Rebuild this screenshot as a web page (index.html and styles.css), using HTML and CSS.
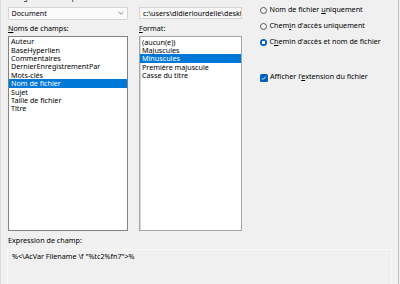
FILE: index.html
```html
<!DOCTYPE html>
<html lang="fr">
<head>
<meta charset="utf-8">
<link rel="stylesheet" href="styles.css">
</head>
<body>
<div class="dialog">
  <div class="top">
    <div class="col col-fields">
      <div class="label label-top">Catégorie de champ:</div>
      <div class="select">
        <span>Document</span>
        <svg class="chev" width="6" height="4" viewBox="0 0 6 4"><path d="M0.5 0.8 L3 3.2 L5.5 0.8" fill="none" stroke="#6a6a6a" stroke-width="0.8"/></svg>
      </div>
      <div class="label label-list"><u>N</u>oms de champs:</div>
      <ul class="list">
        <li>Auteur</li>
        <li>BaseHyperlien</li>
        <li>Commentaires</li>
        <li>DernierEnregistrementPar</li>
        <li>Mots-clés</li>
        <li class="sel">Nom de fichier</li>
        <li>Sujet</li>
        <li>Taille de fichier</li>
        <li>Titre</li>
      </ul>
    </div>
    <div class="col col-format">
      <div class="label label-top">Nom de fichier:</div>
      <div class="input">c:\users\didierlourdelle\desktop\dessin1.dwg</div>
      <div class="label label-list"><u>F</u>ormat:</div>
      <ul class="list list-format">
        <li>(aucun(e))</li>
        <li>Majuscules</li>
        <li class="sel">Minuscules</li>
        <li>Première majuscule</li>
        <li>Casse du titre</li>
      </ul>
    </div>
    <div class="col col-options">
      <div class="opt">
        <span class="radio"></span>
        <span class="opt-text">Nom de fichier <u>u</u>niquement</span>
      </div>
      <div class="opt">
        <span class="radio"></span>
        <span class="opt-text">Chem<u>i</u>n d'accès uniquement</span>
      </div>
      <div class="opt">
        <span class="radio radio-on"></span>
        <span class="opt-text">C<u>h</u>emin d'accès et nom de fichier</span>
      </div>
      <div class="opt opt-check">
        <span class="check"><svg width="8" height="8" viewBox="0 0 8 8"><path d="M1.8 4.2 L3.3 5.6 L6.2 2.5" fill="none" stroke="#ffffff" stroke-width="0.9"/></svg></span>
        <span class="opt-text">Afficher l'<u>e</u>xtension du fichier</span>
      </div>
    </div>
  </div>
  <div class="label expr-label">Expression de champ:</div>
  <div class="expr">%&lt;\AcVar Filename \f "%tc2%fn7"&gt;%</div>
</div>
</body>
</html>
```

FILE: styles.css
```css
html, body {
  margin: 0;
  padding: 0;
}

body {
  width: 400px;
  height: 284px;
  overflow: hidden;
  background: #f0f0f0;
  font-family: "Noto Sans", "Open Sans", sans-serif;
  font-size: 7.2px;
  color: #000;
}

u {
  text-decoration-thickness: 0.6px;
  text-underline-offset: 1px;
}

.dialog {
  width: 399px;
  height: 284px;
  box-sizing: border-box;
  border-left: 1px solid #dcdcdc;
  border-right: 1px solid #c2c2c2;
  padding-left: 7px;
  overflow: hidden;
}

.top {
  display: flex;
  margin-top: -6px;
}

.col {
  display: flex;
  flex-direction: column;
}

.col-fields {
  width: 120px;
}

.col-format {
  width: 103px;
  margin-left: 11px;
}

.col-options {
  margin-left: 18px;
  padding-top: 8.7px;
}

.label {
  height: 9px;
  line-height: 9px;
  white-space: nowrap;
}

.label-top {
  margin-top: -1.5px;
  margin-bottom: 1.5px;
}

.select {
  margin-top: 3.5px;
  height: 13px;
  box-sizing: border-box;
  border: 1px solid #d4d4d4;
  border-radius: 1px;
  background: #fbfbfb;
  display: flex;
  align-items: center;
  justify-content: space-between;
  padding: 0 3px 0 2.5px;
  line-height: 11px;
}

.input {
  margin-top: 3.5px;
  height: 12.5px;
  box-sizing: border-box;
  border: 1px solid #d6d6d6;
  background: #f6f6f6;
  padding: 0 0 0 3px;
  line-height: 10.5px;
  white-space: nowrap;
  overflow: hidden;
}

.label-list {
  margin-top: 4.5px;
}

.list {
  list-style: none;
  margin: 3px 0 0 0;
  padding: 0.3px 0 0 0;
  height: 195px;
  box-sizing: border-box;
  border: 1px solid #828282;
  background: #fff;
}

.list-format {
  margin-top: 3.5px;
  padding-top: 0.5px;
  border: 1px solid #a6a6a6;
  box-shadow: inset 1px 0 0 #d8d8d8;
}

.list li {
  height: 8.4px;
  line-height: 8.4px;
  padding-left: 2px;
  white-space: nowrap;
}

.list li.sel {
  background: #0078d7;
  color: #fff;
}

.opt {
  display: flex;
  align-items: center;
  height: 16px;
  white-space: nowrap;
}

.opt-check {
  margin-top: 19.3px;
}

.opt-text {
  margin-left: 2.5px;
  line-height: 9px;
  margin-top: -2px;
}

.radio {
  width: 7px;
  height: 7px;
  box-sizing: border-box;
  border: 0.8px solid #555;
  border-radius: 50%;
  background: #f7f7f7;
  flex: none;
}

.radio-on {
  border: none;
  background: radial-gradient(circle, #fff 0 1.5px, #005fb8 1.9px);
}

.check {
  width: 7.5px;
  height: 7.5px;
  border-radius: 1.5px;
  background: #005fb8;
  display: flex;
  align-items: center;
  justify-content: center;
  flex: none;
}

.expr-label {
  margin-top: 5.4px;
}

.expr {
  margin-top: 4px;
  margin-left: -1px;
  width: 385px;
  height: 40px;
  box-sizing: border-box;
  border: 1px solid #f8f8f8;
  background: #f0f0f0;
  padding: 1.5px 0 0 4px;
  line-height: 9px;
  white-space: nowrap;
}
```
